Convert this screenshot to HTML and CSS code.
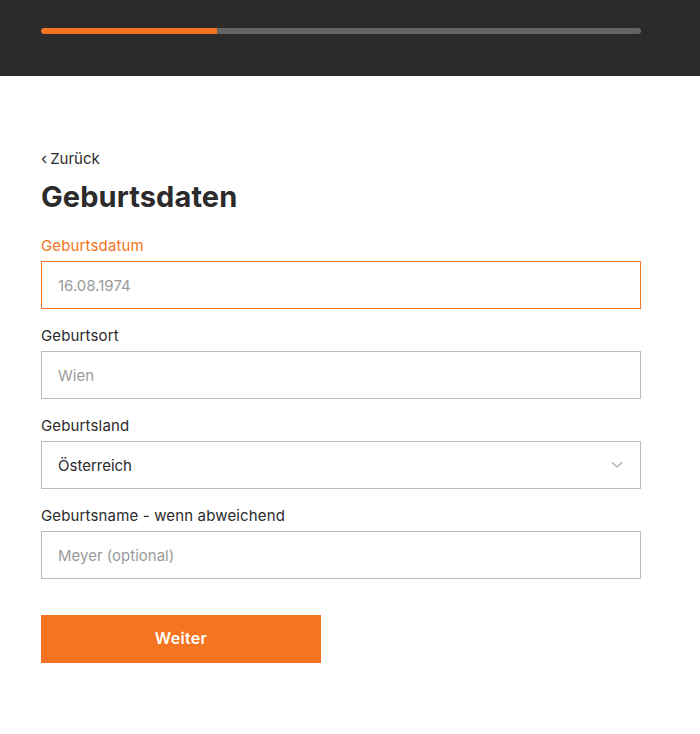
FILE: index.html
```html
<!DOCTYPE html>
<html lang="de">
<head>
  <meta charset="UTF-8" />
  <title>Geburtsdaten</title>
  <link rel="stylesheet" href="styles.css">
</head>
<body>

  <!-- Fortschritt -->
  <header class="topbar">
    <div class="progress">
      <div class="progress-fill" style="width: 29.3%"></div>
    </div>
  </header>

  <main class="content">
    <a class="back" href="#"><span class="back-arrow">‹</span>Zurück</a>
    <h1>Geburtsdaten</h1>

    <form class="form">
      <div class="field field-active">
        <label for="birthDate">Geburtsdatum</label>
        <input type="text" id="birthDate" placeholder="16.08.1974" />
      </div>

      <div class="field">
        <label for="birthPlace">Geburtsort</label>
        <input type="text" id="birthPlace" placeholder="Wien" />
      </div>

      <div class="field">
        <label for="birthCountry">Geburtsland</label>
        <div class="select">
          <span class="select-value">Österreich</span>
          <svg class="select-arrow" width="12" height="8" viewBox="0 0 12 8">
            <path d="M1 1.5 L6 6 L11 1.5" fill="none" stroke="#a8a8a8" stroke-width="1.2"/>
          </svg>
        </div>
      </div>

      <div class="field">
        <label for="birthName">Geburtsname - wenn abweichend</label>
        <input type="text" id="birthName" placeholder="Meyer (optional)" />
      </div>

      <button type="submit" class="btn">Weiter</button>
    </form>
  </main>

</body>
</html>
```

FILE: styles.css
```css
/* Grundlayout */
body {
  margin: 0;
  background-color: #fff;
  color: #2c2a2b;
  font-family: Inter, 'Liberation Sans', sans-serif;
}

/* Kopfzeile mit Fortschritt */
.topbar {
  background-color: #2c2a2b;
  height: 76px;
  padding: 28px 59px 0 41px;
  box-sizing: border-box;
}

.progress {
  height: 6px;
  border-radius: 3px;
  background-color: #646464;
  overflow: hidden;
}

.progress-fill {
  height: 100%;
  background-color: #f47421;
  border-radius: 3px 0 0 3px;
}

/* Inhalt */
.content {
  width: 600px;
  padding: 73px 0 0 41px;
}

.back {
  display: inline-flex;
  align-items: center;
  gap: 3px;
  color: #2c2a2b;
  text-decoration: none;
  font-size: 15px;
  line-height: 20px;
  letter-spacing: 0;
}

.back-arrow {
  font-size: 16px;
  line-height: 20px;
  position: relative;
  top: -1px;
}

h1 {
  font-size: 29px;
  font-weight: 700;
  letter-spacing: 0.1px;
  line-height: 34px;
  margin: 11px 0 21px;
}

/* Formular */
.field {
  display: flex;
  flex-direction: column;
  gap: 5px;
  margin-bottom: 16px;
}

.field label {
  font-size: 15px;
  line-height: 20px;
  padding-top: 1px;
  letter-spacing: 0.15px;
}

.field-active label {
  color: #f47421;
}

.field input,
.select {
  box-sizing: border-box;
  height: 48px;
  border: 1px solid #bcbcbc;
  padding: 0 16px;
  font-family: inherit;
  font-size: 15px;
  letter-spacing: 0;
  color: #2c2a2b;
  outline: none;
}

.field-active input {
  border-color: #f47421;
}

.field input::placeholder {
  color: #9a9a9a;
}

.select {
  display: flex;
  align-items: center;
  justify-content: space-between;
  padding-right: 17px;
}

.btn {
  margin-top: 20px;
  width: 280px;
  height: 48px;
  padding: 0 0 3px;
  border: none;
  background-color: #f47421;
  color: #fff;
  font-family: inherit;
  font-size: 16px;
  font-weight: 600;
  letter-spacing: 0.3px;
  cursor: pointer;
}
```
